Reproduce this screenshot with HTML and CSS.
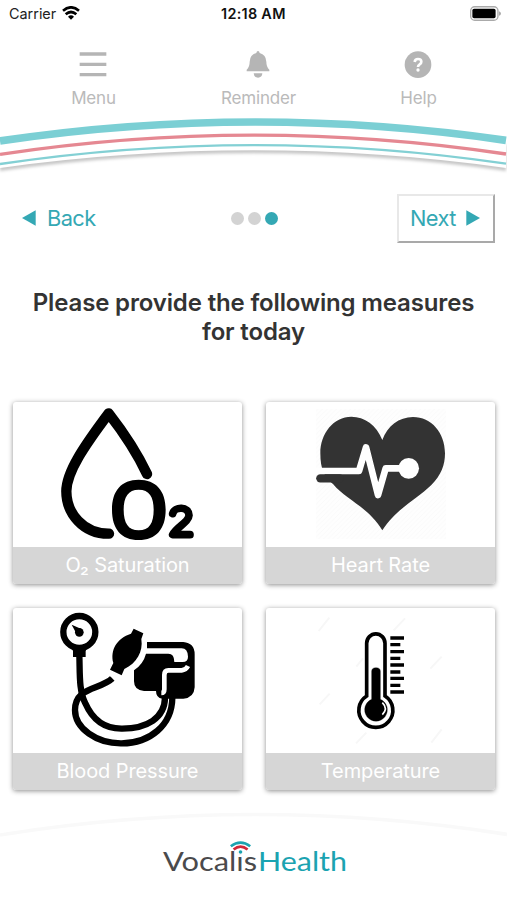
FILE: index.html
```html
<!DOCTYPE html>
<html lang="en">
<head>
  <meta charset="UTF-8">
  <meta name="viewport" content="width=device-width, initial-scale=1.0">
  <title>Vocalis Health</title>
  <link rel="stylesheet" href="styles.css">
</head>
<body>

  <div class="status-bar">
    <div class="carrier">
      <span>Carrier</span>
      <svg class="wifi" viewBox="0 0 54 42">
        <path d="M3 14 Q27 -6 51 14" fill="none" stroke="#000" stroke-width="8"/>
        <path d="M11 25 Q27 11 43 25" fill="none" stroke="#000" stroke-width="8"/>
        <path d="M18 32 Q27 24 36 32 L27 41 Z" fill="#000"/>
      </svg>
    </div>
    <span class="time">12:18 AM</span>
    <div class="power">
      <svg class="battery" viewBox="0 0 92 44">
        <rect x="2" y="2" width="81" height="40" rx="12" fill="#fff" stroke="#aaa" stroke-width="4"/>
        <rect x="7" y="8" width="69" height="28" rx="5" fill="#000"/>
        <path d="M86 15 Q92 17 92 22 Q92 27 86 29 Z" fill="#aaa"/>
      </svg>
    </div>
  </div>

  <div class="top-menu">
    <div class="menu-item">
      <svg class="menu-icon" viewBox="0 0 84 84">
        <path d="M2 9H82M2 40H82M2 71H82" stroke="#b5b5b5" stroke-width="10"/>
      </svg>
      <span class="menu-text">Menu</span>
    </div>
    <div class="menu-item">
      <svg class="menu-icon" viewBox="0 0 84 84">
        <path d="M42 0 Q46 0 47 6 Q66 11 67 32 Q67 48 76 56 V61 H8 V56 Q17 48 17 32 Q18 11 37 6 Q38 0 42 0Z" fill="#b5b5b5"/>
        <path d="M29 67 H55 Q54 80 42 80 Q30 80 29 67Z" fill="#b5b5b5"/>
      </svg>
      <span class="menu-text">Reminder</span>
    </div>
    <div class="menu-item">
      <svg class="menu-icon" viewBox="0 0 84 84">
        <circle cx="42" cy="41" r="40" fill="#b5b5b5"/>
        <path d="M32 33 Q33 24 42 24 Q52 24 52 32 Q52 37 47 40 Q42 43 42 48" fill="none" stroke="#fff" stroke-width="8"/>
        <circle cx="42" cy="57" r="5" fill="#fff"/>
      </svg>
      <span class="menu-text">Help</span>
    </div>
  </div>

  <svg class="stripes" viewBox="0 0 1521 225">
    <path class="stripes-shadow" d="M0 189 Q760 83 1518 189 V110 H0 Z" fill="#fff"/>
    <g fill="none">
      <path d="M0 108 Q760 -5 1518 106" stroke="#7bcfd4" stroke-width="23"/>
      <path d="M0 148 Q760 33 1518 147" stroke="#e58892" stroke-width="10"/>
      <path d="M0 177 Q760 64 1518 176" stroke="#83d0d4" stroke-width="7"/>
    </g>
  </svg>

  <div class="nav">
    <div class="back">
      <svg class="arrow" viewBox="0 0 42 48"><path d="M0 24 L41 1 V47 Z" fill="#34a8b4"/></svg>
      <span>Back</span>
    </div>
    <div class="dots">
      <span class="dot"></span>
      <span class="dot"></span>
      <span class="dot active"></span>
    </div>
    <div class="next">
      <span>Next</span>
      <svg class="arrow" viewBox="0 0 42 48"><path d="M42 24 L1 1 V47 Z" fill="#34a8b4"/></svg>
    </div>
  </div>

  <h1>Please provide the following measures<br>for today</h1>

  <div class="cards">
    <div class="card">
      <svg class="card-picture" viewBox="39 36 687 435">
        <g fill="none" stroke="#000" stroke-linecap="round" stroke-linejoin="round">
          <path d="M441 252 Q400 165 326 70 C255 165 199 245 199 304 C199 370 250 432 327 431" stroke-width="31"/>
          <path d="M518 371 C523 349 567 348 567 376 C566 397 530 410 518 434 H570" stroke-width="23"/>
        </g>
        <path fill-rule="evenodd" d="M416 269 C468 269 497 302 497 359 C497 417 468 450 416 450 C364 450 336 417 336 359 C336 302 364 269 416 269Z M416 299 C385 299 371 321 371 359 C371 399 385 421 416 421 C448 421 461 399 461 359 C461 321 448 299 416 299Z"/>
      </svg>
      <div class="card-label">O₂ Saturation</div>
    </div>

    <div class="card">
      <svg class="card-picture" viewBox="39 36 687 435">
        <defs>
          <pattern id="hatch" width="14" height="14" patternUnits="userSpaceOnUse">
            <path d="M0 14 L14 0" stroke="#f5f5f5" stroke-width="1.5"/>
          </pattern>
        </defs>
        <rect x="189" y="57" width="390" height="390" fill="#fefefe"/>
        <rect x="189" y="57" width="390" height="390" fill="url(#hatch)"/>
        <path d="M388 150 C370 105 335 80 295 80 C242 80 202 130 202 190 C202 238 215 264 240 282 C280 330 345 350 388 421 C430 355 490 330 535 285 C565 255 576 225 576 190 C576 128 535 81 480 81 C438 81 403 108 388 150Z" fill="#333"/>
        <path d="M185 243 H318 L339 172 L375 315 L398 235 H450" fill="none" stroke="#fff" stroke-width="20" stroke-linejoin="round"/>
        <circle cx="467" cy="235" r="31" fill="#fff"/>
        <path d="M202 265 H260" stroke="#333" stroke-width="25" stroke-linecap="round"/>
      </svg>
      <div class="card-label">Heart Rate</div>
    </div>

    <div class="card">
      <svg class="card-picture" viewBox="39 39 687 435">
        <!-- gauge -->
        <circle cx="238" cy="111" r="48" fill="none" stroke="#000" stroke-width="19"/>
        <circle cx="238" cy="112" r="13" fill="#000"/>
        <path d="M215 89 L246 103 L232 121 Z" fill="#000"/>
        <path d="M213 155 H263 L257 168 V186 H219 V168 Z" fill="#000"/>
        <!-- tubes -->
        <g fill="none" stroke="#000" stroke-width="19">
          <path d="M238 180 C240 235 236 285 256 325 C280 380 320 402 367 401 C440 400 494 370 495 308"/>
          <path d="M337 250 C300 285 225 275 225 345 C225 400 290 446 365 445 C450 445 516 390 517 308"/>
        </g>
        <!-- cuff -->
        <path d="M441 141 H550 Q584 144 584 178 V277 Q582 309 550 311 H487 Q468 309 468 288 H432 Q402 286 402 259 V226 Q430 207 438 176 H505 Q523 176 523 201 H548 Q564 201 564 185 Q563 160 545 160 H441 Z" fill="#000"/>
        <path d="M564 213 Q558 225 545 226 H505 Q493 226 493 240 V283 Q493 294 484 294" fill="none" stroke="#fff" stroke-width="14"/>
        <!-- bulb -->
        <path d="M401 101 L430 115 L424 132 C430 170 410 205 373 222 L365 241 L330 224 L340 204 C330 165 350 130 393 116 Z" fill="#000"/>
        <path d="M325 235 L351 252" stroke="#fff" stroke-width="9"/>
      </svg>
      <div class="card-label">Blood Pressure</div>
    </div>

    <div class="card">
      <svg class="card-picture" viewBox="39 39 687 435">
        <g stroke="#f7f7f7" stroke-width="6">
          <path d="M197 108 L229 68M422 106 L456 70M532 221 L566 185M200 328 L230 296M309 445 L340 413M535 443 L566 403M310 215 L330 190"/>
        </g>
        <path d="M341 303 V145 A27 28 0 0 1 396 145 V303 A51 51 0 1 1 341 303Z" fill="#fff" stroke="#000" stroke-width="11"/>
        <path d="M356 313 V229 Q356 218 369 218 Q382 218 382 229 V313 A34 34 0 1 1 356 313Z" fill="#000" stroke="#000" stroke-width="1"/>
        <path d="M388 323 Q406 341 388 359" fill="none" stroke="#fff" stroke-width="5"/>
        <path d="M412 129H453M412 170H453M412 210H453M412 250H453M412 291H453M412 149H442M412 190H442M412 231H442M412 271H442" stroke="#000" stroke-width="10"/>
      </svg>
      <div class="card-label">Temperature</div>
    </div>
  </div>

  <div class="footer">
    <svg class="footer-curve" viewBox="0 0 1521 105">
      <path d="M0 90 Q760 -32 1521 88" fill="none" stroke="#f9f9f9" stroke-width="11"/>
    </svg>
    <svg class="logo" viewBox="0 0 190 44">
      <text x="5" y="35" class="logo-text logo-dark" textLength="94" lengthAdjust="spacingAndGlyphs">Vocalis</text>
      <text x="100" y="35" class="logo-text logo-teal" textLength="89" lengthAdjust="spacingAndGlyphs">Health</text>
      <rect x="79.5" y="12.5" width="6" height="6.3" fill="#fff"/>
      <circle cx="82.5" cy="16" r="1.8" fill="#1ba3b1"/>
      <path d="M72.8 10.3 Q82.5 2.8 92.2 10.3" fill="none" stroke="#1ba3b1" stroke-width="2.6"/>
      <path d="M75.6 13.6 Q82.5 7.6 89.6 13.6" fill="none" stroke="#d0283a" stroke-width="2.6"/>
    </svg>
  </div>

</body>
</html>
```
FILE: styles.css
```css
body {
  font-family: Inter, "Liberation Sans", sans-serif;
  margin: 0;
  height: 900px;
  display: flex;
  flex-direction: column;
  background-color: #fff;
  overflow: hidden;
}

svg {
  display: block;
}

/* Status bar */
.status-bar {
  display: grid;
  grid-template-columns: 212px 65px 1fr;
  align-items: center;
  height: 28px;
  padding: 0 6px 0 9px;
  font-size: 14px;
  color: #222;
}

.carrier {
  display: flex;
  align-items: center;
  gap: 6px;
  margin-top: -1px;
  font-size: 14.4px;
}

.wifi {
  width: 18px;
  height: 14px;
  margin-top: -1px;
}

.time {
  margin-top: -1px;
  font-size: 14.4px;
  letter-spacing: 0.3px;
  font-weight: 600;
  white-space: nowrap;
  color: #111;
}

.power {
  display: flex;
  justify-content: flex-end;
}

.battery {
  width: 31px;
  height: 15px;
  margin-top: -2px;
}

/* Top menu */
.top-menu {
  display: grid;
  grid-template-columns: 165px 165px 155px;
  height: 77px;
  padding: 23px 0 0 11px;
  box-sizing: border-box;
}

.menu-item {
  display: flex;
  flex-direction: column;
  align-items: center;
}

.menu-icon {
  width: 28px;
  height: 28px;
  margin-left: -1px;
}

.menu-text {
  margin-top: 9px;
  font-size: 17px;
  line-height: 20px;
  letter-spacing: -0.2px;
  color: #bababa;
}

.stripes {
  width: 507px;
  height: 75px;
  flex-shrink: 0;
}

.stripes-shadow {
  filter: drop-shadow(0 9px 5px rgba(0, 0, 0, 0.22));
}

/* Navigation */
.nav {
  display: grid;
  grid-template-columns: 208px auto 1fr;
  align-items: center;
  height: 49px;
  margin-top: 14px;
  padding: 0 12px 0 22px;
  font-size: 21.8px;
  letter-spacing: -0.6px;
  color: #34a8b4;
}

.back {
  display: flex;
  align-items: center;
  gap: 11px;
}

.back span,
.next span {
  margin-top: -2px;
}

.arrow {
  width: 14px;
  height: 16px;
  margin-top: -1px;
}

.dots {
  display: flex;
  gap: 4px;
  padding-left: 1px;
}

.dot {
  width: 13px;
  height: 13px;
  border-radius: 50%;
  background-color: #d3d3d3;
}

.dot.active {
  background-color: #34a8b4;
}

.next {
  display: flex;
  align-items: center;
  justify-self: end;
  gap: 10px;
  width: 98px;
  height: 49px;
  padding-left: 11px;
  box-sizing: border-box;
  border: 2px solid #e8e8e8;
  border-right-color: #a9a9a9;
  border-bottom-color: #a9a9a9;
  background-color: #fff;
}

h1 {
  margin: 45px 0 0;
  font-size: 24px;
  line-height: 29px;
  font-weight: 600;
  letter-spacing: -0.15px;
  text-align: center;
  color: #333;
}

/* Measures */
.cards {
  display: grid;
  grid-template-columns: 229px 229px;
  grid-template-rows: 182px 182px;
  gap: 24px;
  margin: 56px 0 0 13px;
}

.card {
  display: flex;
  flex-direction: column;
  border-radius: 3px;
  overflow: hidden;
  background-color: #fff;
  box-shadow: 0 1px 5px rgba(0, 0, 0, 0.45);
}

.card-picture {
  width: 229px;
  height: 145px;
  flex-shrink: 0;
}

.card-label {
  flex: 1;
  line-height: 37px;
  font-size: 20px;
  letter-spacing: -0.1px;
  text-align: center;
  color: #fff;
  background-color: #d6d6d6;
}

/* Footer */
.footer {
  margin-top: 15px;
}

.footer-curve {
  width: 507px;
  height: 35px;
}

.logo {
  width: 190px;
  height: 44px;
  margin: -4px 0 0 158px;
}

.logo-text {
  font-family: Lato, sans-serif;
  font-size: 27.5px;
}

.logo-dark {
  fill: #4a4a4c;
}

.logo-teal {
  fill: #1ba3b1;
}
```
